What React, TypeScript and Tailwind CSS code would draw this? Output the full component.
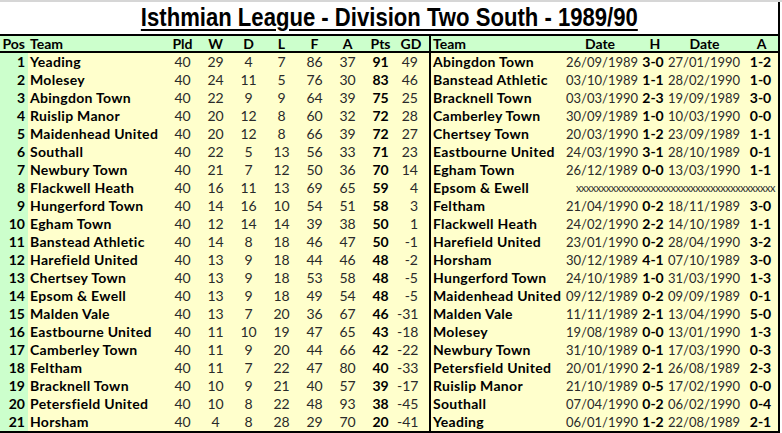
import React from 'react';

type Standing = [number, string, number, number, number, number, number, number, number, number];
type Fixture = [string, string, string, string, string];

const standings: Standing[] = [
  [1, 'Yeading', 40, 29, 4, 7, 86, 37, 91, 49],
  [2, 'Molesey', 40, 24, 11, 5, 76, 30, 83, 46],
  [3, 'Abingdon Town', 40, 22, 9, 9, 64, 39, 75, 25],
  [4, 'Ruislip Manor', 40, 20, 12, 8, 60, 32, 72, 28],
  [5, 'Maidenhead United', 40, 20, 12, 8, 66, 39, 72, 27],
  [6, 'Southall', 40, 22, 5, 13, 56, 33, 71, 23],
  [7, 'Newbury Town', 40, 21, 7, 12, 50, 36, 70, 14],
  [8, 'Flackwell Heath', 40, 16, 11, 13, 69, 65, 59, 4],
  [9, 'Hungerford Town', 40, 14, 16, 10, 54, 51, 58, 3],
  [10, 'Egham Town', 40, 12, 14, 14, 39, 38, 50, 1],
  [11, 'Banstead Athletic', 40, 14, 8, 18, 46, 47, 50, -1],
  [12, 'Harefield United', 40, 13, 9, 18, 44, 46, 48, -2],
  [13, 'Chertsey Town', 40, 13, 9, 18, 53, 58, 48, -5],
  [14, 'Epsom & Ewell', 40, 13, 9, 18, 49, 54, 48, -5],
  [15, 'Malden Vale', 40, 13, 7, 20, 36, 67, 46, -31],
  [16, 'Eastbourne United', 40, 11, 10, 19, 47, 65, 43, -18],
  [17, 'Camberley Town', 40, 11, 9, 20, 44, 66, 42, -22],
  [18, 'Feltham', 40, 11, 7, 22, 47, 80, 40, -33],
  [19, 'Bracknell Town', 40, 10, 9, 21, 40, 57, 39, -17],
  [20, 'Petersfield United', 40, 10, 8, 22, 48, 93, 38, -45],
  [21, 'Horsham', 40, 4, 8, 28, 29, 70, 20, -41],
];

const fixtures: Fixture[] = [
  ['Abingdon Town', '26/09/1989', '3-0', '27/01/1990', '1-2'],
  ['Banstead Athletic', '03/10/1989', '1-1', '28/02/1990', '1-0'],
  ['Bracknell Town', '03/03/1990', '2-3', '19/09/1989', '3-0'],
  ['Camberley Town', '30/09/1989', '1-0', '10/03/1990', '0-0'],
  ['Chertsey Town', '20/03/1990', '1-2', '23/09/1989', '1-1'],
  ['Eastbourne United', '24/03/1990', '3-1', '28/10/1989', '0-1'],
  ['Egham Town', '26/12/1989', '0-0', '13/03/1990', '1-1'],
  ['Epsom & Ewell', '', '', '', ''],
  ['Feltham', '21/04/1990', '0-2', '18/11/1989', '3-0'],
  ['Flackwell Heath', '24/02/1990', '2-2', '14/10/1989', '1-1'],
  ['Harefield United', '23/01/1990', '0-2', '28/04/1990', '3-2'],
  ['Horsham', '30/12/1989', '4-1', '07/10/1989', '3-0'],
  ['Hungerford Town', '24/10/1989', '1-0', '31/03/1990', '1-3'],
  ['Maidenhead United', '09/12/1989', '0-2', '09/09/1989', '0-1'],
  ['Malden Vale', '11/11/1989', '2-1', '13/04/1990', '5-0'],
  ['Molesey', '19/08/1989', '0-0', '13/01/1990', '1-3'],
  ['Newbury Town', '31/10/1989', '0-1', '17/03/1990', '0-3'],
  ['Petersfield United', '20/01/1990', '2-1', '26/08/1989', '2-3'],
  ['Ruislip Manor', '21/10/1989', '0-5', '17/02/1990', '0-0'],
  ['Southall', '07/04/1990', '0-2', '06/02/1990', '0-4'],
  ['Yeading', '06/01/1990', '1-2', '22/08/1989', '2-1'],
];

// same column template for header and every row, so the divider lines up
const cols =
  'grid grid-cols-[28px_138px_33px_33px_33px_33px_33px_33px_33px_34px_135px_72px_30px_73px_37px]';

const Num = ({ children, bold }: { children: React.ReactNode; bold?: boolean }) => (
  <div className={`text-center ${bold ? 'font-bold text-black' : 'text-[#2a2a2a]'}`}>{children}</div>
);

export default function App() {
  return (
    <div className="w-[782px] h-[433px] bg-white font-[Lato,sans-serif] text-[14px] leading-[18px] text-black overflow-hidden">
      <div className="h-[2px] bg-[#d6d6d6]" />
      <div className="w-[780px] border-r-2 border-black">
        {/* title */}
        <div className="h-[32px] flex items-start justify-center">
          <h1 className="font-['Liberation_Sans',Arial,sans-serif] font-bold text-[26px] leading-[30px] underline underline-offset-[3px] decoration-2 scale-x-[0.85] whitespace-nowrap">
            Isthmian League - Division Two South - 1989/90
          </h1>
        </div>

        {/* header */}
        <div className={`${cols} h-[19px] bg-[#ccffcc] border-y-2 border-black font-bold leading-[15px]`}>
          <div className="text-right pr-[3px]">Pos</div>
          <div className="pl-[2px]">Team</div>
          <div className="text-center">Pld</div>
          <div className="text-center">W</div>
          <div className="text-center">D</div>
          <div className="text-center">L</div>
          <div className="text-center">F</div>
          <div className="text-center">A</div>
          <div className="text-center">Pts</div>
          <div className="text-center border-r-2 border-black pr-[4px]">GD</div>
          <div className="pl-[2px]">Team</div>
          <div className="text-center pr-[4px]">Date</div>
          <div className="text-center pl-[4px]">H</div>
          <div className="text-center">Date</div>
          <div className="text-center pl-[4px]">A</div>
        </div>

        {/* rows */}
        <div className="bg-[#ffffcc] border-b-2 border-black">
          {standings.map((s, i) => {
            const f = fixtures[i];
            return (
              <div key={s[0]} className={`${cols} h-[18px]`}>
                <div className="bg-[#ccffcc] text-right pr-[3px] font-bold">{s[0]}</div>
                <div className="pl-[2px] font-bold whitespace-nowrap tracking-[0.3px]">{s[1]}</div>
                <Num>{s[2]}</Num>
                <Num>{s[3]}</Num>
                <Num>{s[4]}</Num>
                <Num>{s[5]}</Num>
                <Num>{s[6]}</Num>
                <Num>{s[7]}</Num>
                <Num bold>{s[8]}</Num>
                <div className="text-right pr-[11px] text-[#2a2a2a] border-r-2 border-black">{s[9]}</div>
                <div className="pl-[2px] font-bold whitespace-nowrap tracking-[0.3px]">{f[0]}</div>
                {f[1] ? (
                  <>
                    <div className="text-right pr-[4px] text-[#2a2a2a] text-[13px]">{f[1]}</div>
                    <div className="text-center font-bold">{f[2]}</div>
                    <div className="text-right pr-[3px] text-[#2a2a2a] text-[13px]">{f[3]}</div>
                    <div className="text-center font-bold pl-[2px]">{f[4]}</div>
                  </>
                ) : (
                  <div className="col-span-4 text-right pr-[3px] text-[#333] text-[11px] tracking-[-0.5px] overflow-hidden whitespace-nowrap">
                    {'x'.repeat(40)}
                  </div>
                )}
              </div>
            );
          })}
        </div>
      </div>
    </div>
  );
}
